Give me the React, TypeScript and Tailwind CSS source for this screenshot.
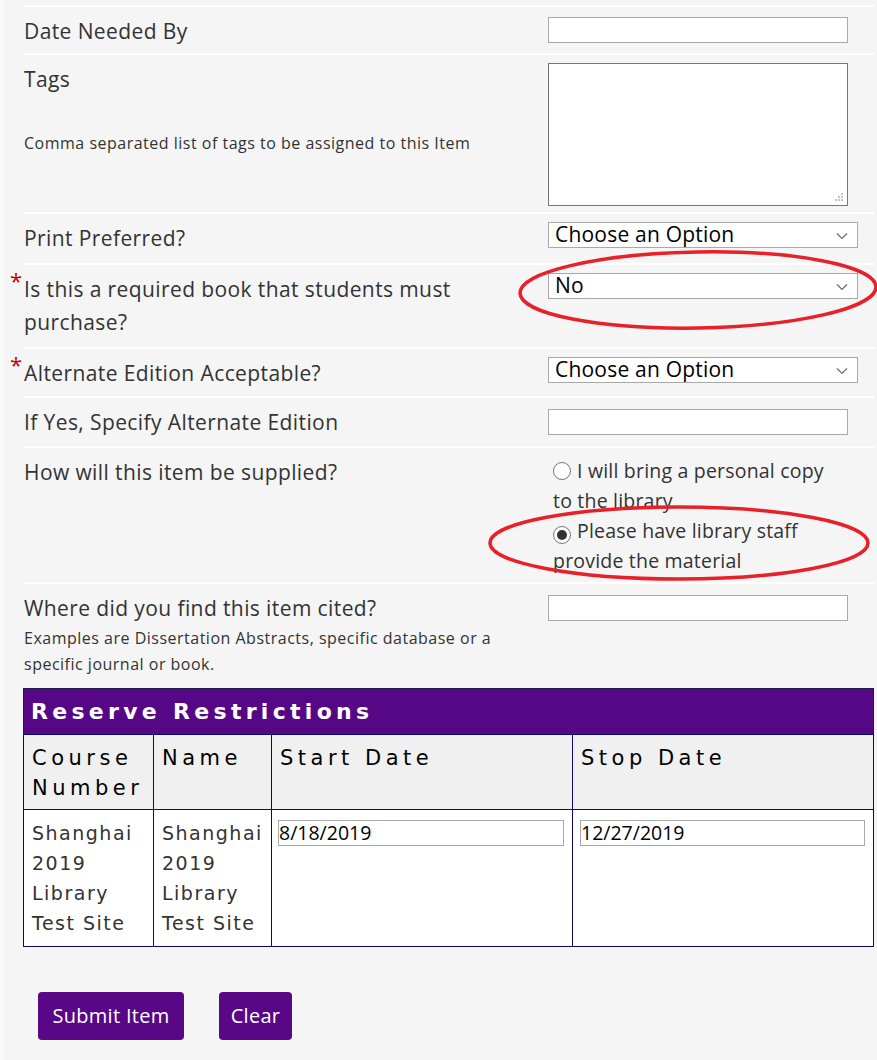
import React from 'react';

const labelFont = { fontFamily: '"Open Sans", "Liberation Sans", sans-serif' };
const tableFont = { fontFamily: '"DejaVu Sans", Verdana, sans-serif' };

function Chevron() {
  return (
    <svg className="absolute right-[9px] top-[9px]" width="12" height="8" viewBox="0 0 12 8" fill="none">
      <path d="M1 1.5 L6 6.5 L11 1.5" stroke="#6b6b6b" strokeWidth="1.2" />
    </svg>
  );
}

function Select({ value }: { value: string }) {
  return (
    <div className="relative w-[310px] h-[26px] bg-white border border-[#a9a9a9] text-[21px] leading-[23px] tracking-[0.2px] text-black pl-[6px]">
      {value}
      <Chevron />
    </div>
  );
}

function TextInput({ className = '' }: { className?: string }) {
  return <div className={`w-[300px] h-[26px] bg-white border border-[#a9a9a9] ${className}`} />;
}

function Required() {
  return <span className="absolute left-[-13px] top-[-4px] text-[#cc0000] text-[22px] leading-[22px]">*</span>;
}

function Radio({ checked = false }: { checked?: boolean }) {
  return (
    <span className="inline-flex w-[18px] h-[18px] mr-[6px] rounded-full border border-[#767676] bg-white items-center justify-center align-[-2px]">
      {checked && <span className="w-[10px] h-[10px] rounded-full bg-[#333333]" />}
    </span>
  );
}

const rows = 'flex border-b-2 border-white pt-[8px]';
const label = 'text-[21px] font-medium leading-[33px] tracking-[0.4px]';

export default function App() {
  return (
    <div className="w-[877px] h-[1060px] bg-[#fafafa] pl-[4px]" style={labelFont}>
      <div className="relative h-full bg-[#f5f5f5] pl-[19px] pr-[3px] pt-[5px] text-[#333333]">
        <div className="border-t-2 border-white" />

        <div className={`${rows} h-[48px]`}>
          <div className={`w-[525px] pl-[1px] ${label}`}>Date Needed By</div>
          <TextInput className="mt-[2px]" />
        </div>

        <div className={`${rows} h-[159px]`}>
          <div className="w-[525px] pl-[1px]">
            <div className={label}>Tags</div>
            <div className="mt-[34px] text-[16px] leading-[26px] tracking-[0.5px]">Comma separated list of tags to be assigned to this Item</div>
          </div>
          <div className="relative w-[300px] h-[143px] bg-white border border-[#767676]">
            <svg className="absolute right-[3px] bottom-[3px]" width="10" height="10" viewBox="0 0 10 10">
              <rect x="7" y="1" width="2" height="2" fill="#c4c4c4" />
              <rect x="4" y="4" width="2" height="2" fill="#c4c4c4" />
              <rect x="7" y="4" width="2" height="2" fill="#c4c4c4" />
              <rect x="1" y="7" width="2" height="2" fill="#c4c4c4" />
              <rect x="4" y="7" width="2" height="2" fill="#c4c4c4" />
              <rect x="7" y="7" width="2" height="2" fill="#c4c4c4" />
            </svg>
          </div>
        </div>

        <div className={`${rows} h-[51px]`}>
          <div className={`w-[525px] pl-[1px] ${label}`}>Print Preferred?</div>
          <Select value="Choose an Option" />
        </div>

        <div className={`${rows} h-[84px]`}>
          <div className={`relative w-[525px] pl-[1px] ${label}`}>
            <Required />
            Is this a required book that students must
            <br />
            purchase?
          </div>
          <Select value="No" />
        </div>

        <div className={`${rows} h-[49px]`}>
          <div className={`relative w-[525px] pl-[1px] ${label}`}>
            <Required />
            Alternate Edition Acceptable?
          </div>
          <Select value="Choose an Option" />
        </div>

        <div className={`${rows} h-[50px]`}>
          <div className={`w-[525px] pl-[1px] ${label}`}>If Yes, Specify Alternate Edition</div>
          <TextInput className="mt-[3px]" />
        </div>

        <div className={`${rows} h-[136px]`}>
          <div className={`w-[525px] pl-[1px] ${label}`}>How will this item be supplied?</div>
          <div className="w-[300px] pl-[5px] text-[19.5px] leading-[30px] tracking-[0.2px]">
            <div>
              <Radio />
              I will bring a personal copy to the library
            </div>
            <div>
              <Radio checked />
              Please have library staff provide the material
            </div>
          </div>
        </div>

        <div className="flex pt-[8px] h-[104px]">
          <div className="w-[525px] pl-[1px]">
            <div className={label}>Where did you find this item cited?</div>
            <div className="w-[500px] text-[16px] leading-[26px] tracking-[0.5px]">
              Examples are Dissertation Abstracts, specific database or a specific journal or book.
            </div>
          </div>
          <TextInput className="mt-[3px]" />
        </div>

        <table className="w-[851px] border-collapse border border-[#1c1c4a] bg-white" style={tableFont}>
          <thead>
            <tr>
              <th colSpan={4} className="h-[46px] bg-[#560785] text-left pl-[7px] text-white text-[22px] font-bold tracking-[4.3px]">
                Reserve Restrictions
              </th>
            </tr>
            <tr className="bg-[#f0f0f0] h-[75px]">
              <th className="w-[130px] border border-[#0a0a6e] align-top text-left font-normal pl-[8px] pt-[8px] text-[21px] leading-[30px] tracking-[4.5px] text-black">
                Course Number
              </th>
              <th className="w-[118px] border border-[#0a0a6e] align-top text-left font-normal pl-[8px] pt-[8px] text-[21px] leading-[30px] tracking-[4.5px] text-black">
                Name
              </th>
              <th className="w-[301px] border border-[#0a0a6e] align-top text-left font-normal pl-[8px] pt-[8px] text-[21px] leading-[30px] tracking-[4.5px] text-black">
                Start Date
              </th>
              <th className="border border-[#0a0a6e] align-top text-left font-normal pl-[8px] pt-[8px] text-[21px] leading-[30px] tracking-[4.5px] text-black">
                Stop Date
              </th>
            </tr>
          </thead>
          <tbody>
            <tr className="h-[137px]">
              <td className="border border-[#0a0a6e] align-top pl-[8px] pt-[8px] text-[19px] leading-[30px] tracking-[1.5px] text-[#333333]">
                Shanghai 2019 Library Test Site
              </td>
              <td className="border border-[#0a0a6e] align-top pl-[8px] pt-[8px] text-[19px] leading-[30px] tracking-[1.5px] text-[#333333]">
                Shanghai 2019 Library Test Site
              </td>
              <td className="border border-[#0a0a6e] align-top pl-[6px] pt-[10px]">
                <div className="w-[286px] h-[26px] bg-white border border-[#a9a9a9] text-[19.5px] leading-[24px] text-black" style={labelFont}>
                  8/18/2019
                </div>
              </td>
              <td className="border border-[#0a0a6e] align-top pl-[7px] pt-[10px]">
                <div className="w-[285px] h-[26px] bg-white border border-[#a9a9a9] text-[19.5px] leading-[24px] text-black" style={labelFont}>
                  12/27/2019
                </div>
              </td>
            </tr>
          </tbody>
        </table>

        <div className="flex gap-[35px] pl-[15px] mt-[45px]">
          <button className="w-[146px] h-[48px] rounded-[4px] bg-[#5a0787] text-white text-[20px] tracking-[0.3px]">Submit Item</button>
          <button className="w-[73px] h-[48px] rounded-[4px] bg-[#5a0787] text-white text-[20px] tracking-[0.3px]">Clear</button>
        </div>

        <svg className="absolute left-[508px] top-[248px] pointer-events-none" width="372" height="90" viewBox="0 0 372 90" fill="none">
          <ellipse cx="186" cy="42" rx="178" ry="38" stroke="#e8202a" strokeWidth="3.5" transform="rotate(-1 186 42)" />
        </svg>
        <svg className="absolute left-[480px] top-[501px] pointer-events-none" width="392" height="84" viewBox="0 0 392 84" fill="none">
          <ellipse cx="195" cy="42" rx="189" ry="36" stroke="#e8202a" strokeWidth="3.5" />
        </svg>
      </div>
    </div>
  );
}
